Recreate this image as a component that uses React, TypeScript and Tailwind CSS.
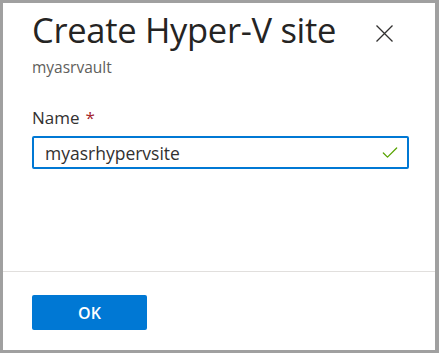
import { Check } from "lucide-react"

export default function App() {
  return (
    <div className="flex h-[353px] w-[439px] flex-col border-[3px] border-r-4 border-[#a0a0a0] bg-white font-['Open_Sans',sans-serif] text-[#323130]">
      <div className="flex-1 pl-[29px] pr-[26px]">
        {/* Header */}
        <div className="flex items-start justify-between">
          <div>
            <h1 className="mt-[4px] text-[34.5px] leading-[46px] font-medium tracking-[-0.3px] text-[#252423]">
              Create Hyper-V site
            </h1>
            <p className="mt-[4px] text-[15.5px] leading-[20px] text-[#605e5c]">myasrvault</p>
          </div>
          <button className="mt-[22px] mr-[16px] text-[#323130]">
            <svg width="17" height="17" viewBox="0 0 17 17" fill="none" stroke="currentColor" strokeWidth="1.3">
              <path d="M0.5 0.5L16.5 16.5M16.5 0.5L0.5 16.5" />
            </svg>
          </button>
        </div>

        {/* Name field */}
        <div className="mt-[29px]">
          <label className="flex items-center gap-[6px] text-[17px] leading-[24px]">
            Name <span className="text-[#a4262c]">*</span>
          </label>
          <div className="mt-[6px] flex h-[33px] items-center rounded-[2px] border-2 border-[#0078d4] pr-[7px] pl-[11px]">
            <span className="flex-1 text-[17.5px] leading-[24px] text-[#323130]">myasrhypervsite</span>
            <Check className="size-[20px] text-[#57a300]" strokeWidth={1.5} />
          </div>
        </div>
      </div>

      {/* Footer */}
      <div className="h-[79px] border-t border-[#e1dfdd] pt-[23px] pl-[29px]">
        <button className="flex h-[35px] w-[115px] items-center justify-center rounded-[2px] bg-[#0078d4] text-[16px] font-semibold text-white">
          OK
        </button>
      </div>
    </div>
  )
}
